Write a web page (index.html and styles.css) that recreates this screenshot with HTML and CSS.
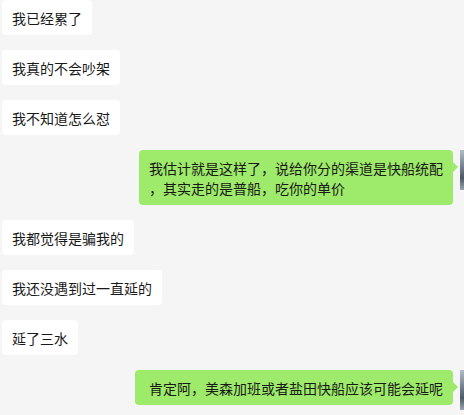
FILE: index.html
```html
<!DOCTYPE html>
<html lang="zh-CN">
<head>
    <meta charset="UTF-8">
    <meta name="viewport" content="width=device-width, initial-scale=1.0">
    <title>聊天记录</title>
    <link rel="stylesheet" href="styles.css">
</head>
<body>
    <div class="chat">
        <div class="row left"><div class="bubble">我已经累了</div></div>
        <div class="row left"><div class="bubble">我真的不会吵架</div></div>
        <div class="row left"><div class="bubble">我不知道怎么怼</div></div>
        <div class="row right">
            <div class="bubble me wrap">我估计就是这样了，说给你分的渠道是快船统配，其实走的是普船，吃你的单价</div>
            <div class="avatar"></div>
        </div>
        <div class="row left"><div class="bubble">我都觉得是骗我的</div></div>
        <div class="row left"><div class="bubble">我还没遇到过一直延的</div></div>
        <div class="row left"><div class="bubble">延了三水</div></div>
        <div class="row right">
            <div class="bubble me wide">肯定阿，美森加班或者盐田快船应该可能会延呢</div>
            <div class="avatar"></div>
        </div>
    </div>
</body>
</html>
```

FILE: styles.css
```css
body {
    margin: 0;
    padding: 0;
    background-color: #f5f5f5;
    font-family: "Noto Sans CJK SC", "Microsoft YaHei", sans-serif;
}

.chat {
    display: flex;
    flex-direction: column;
    gap: 15px;
    padding: 0 0 0 2px;
}

.row {
    display: flex;
    align-items: flex-start;
}

.row.right {
    justify-content: flex-end;
    gap: 7px;
}

.bubble {
    position: relative;
    background-color: #fff;
    color: #191919;
    font-size: 14px;
    line-height: 20px;
    padding: 8px 10px 7px 10px;
    border-radius: 4px;
}

.bubble.me {
    background-color: #9eea6a;
}

/* little arrow pointing at the avatar */
.bubble.me::after {
    content: "";
    position: absolute;
    right: -5px;
    top: 12px;
    border-top: 5px solid transparent;
    border-bottom: 5px solid transparent;
    border-left: 5px solid #9eea6a;
}

.bubble.wrap {
    width: 294px;
    line-break: anywhere;
}

.bubble.wide {
    padding-left: 14px;
}

/* only the left edge of the avatar is inside the window */
.avatar {
    width: 4px;
    height: 40px;
    flex-shrink: 0;
    background: linear-gradient(180deg, #b3bcc6 0%, #6f7c8b 45%, #4d5866 70%, #9aa4ae 100%);
}
```
